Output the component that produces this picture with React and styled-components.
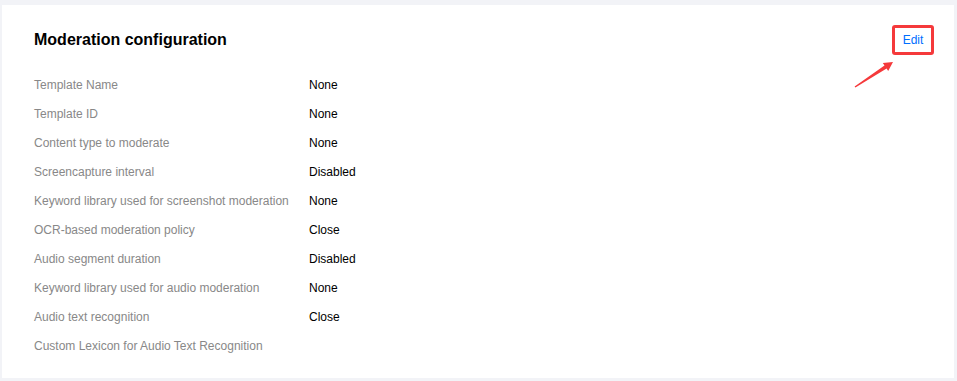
import React from 'react';
import styled, { createGlobalStyle } from 'styled-components';

const rows = [
    { label: 'Template Name', value: 'None' },
    { label: 'Template ID', value: 'None' },
    { label: 'Content type to moderate', value: 'None' },
    { label: 'Screencapture interval', value: 'Disabled' },
    { label: 'Keyword library used for screenshot moderation', value: 'None' },
    { label: 'OCR-based moderation policy', value: 'Close' },
    { label: 'Audio segment duration', value: 'Disabled' },
    { label: 'Keyword library used for audio moderation', value: 'None' },
    { label: 'Audio text recognition', value: 'Close' },
    { label: 'Custom Lexicon for Audio Text Recognition', value: '' },
];

const App = () => {
    return (
        <>
            <GlobalStyle />
            <Page>
                <Card>
                    <Header>
                        <Title>Moderation configuration</Title>
                        <Highlight>
                            <EditLink href="#" onClick={(e) => e.preventDefault()}>Edit</EditLink>
                        </Highlight>
                    </Header>
                    <List>
                        {rows.map((row) => (
                            <Row key={row.label}>
                                <Label>{row.label}</Label>
                                <Value>{row.value}</Value>
                            </Row>
                        ))}
                    </List>
                    <Arrow width="50" height="36" viewBox="0 0 50 36">
                        <polygon
                            points="4.6,29.5 34.5,8.5 32.8,6 43,5 38.2,13.9 36.6,11.4 5.4,30.5"
                            fill="#f5393b"
                        />
                    </Arrow>
                </Card>
            </Page>
        </>
    );
}

const GlobalStyle = createGlobalStyle`
    body {
        margin: 0;
        background: #f2f3f7;
        font-family: "Liberation Sans", Arial, sans-serif;
    }
`;

const Page = styled.div`
    padding: 5px 3px 3px 2px;
`;

const Card = styled.div`
    position: relative;
    background: #fff;
    padding: 20px 20px 18px 32px;
`;

const Header = styled.div`
    display: flex;
    align-items: center;
    justify-content: space-between;
    height: 30px;
    margin-bottom: 15px;
`;

const Title = styled.h2`
    margin: 0;
    font-size: 16px;
    font-weight: bold;
    color: #000;
`;

const Highlight = styled.div`
    display: flex;
    align-items: center;
    justify-content: center;
    box-sizing: border-box;
    width: 42px;
    height: 30px;
    border: 3px solid #f5393b;
    border-radius: 3px;
`;

const EditLink = styled.a`
    font-size: 12px;
    color: #006eff;
    text-decoration: none;
`;

const List = styled.div`
    display: flex;
    flex-direction: column;
`;

const Row = styled.div`
    display: flex;
    align-items: center;
    height: 29px;
    font-size: 12px;
`;

const Label = styled.div`
    width: 275px;
    color: #888;
`;

const Value = styled.div`
    color: #000;
`;

const Arrow = styled.svg`
    position: absolute;
    left: 848px;
    top: 52px;
`;

export default App;
